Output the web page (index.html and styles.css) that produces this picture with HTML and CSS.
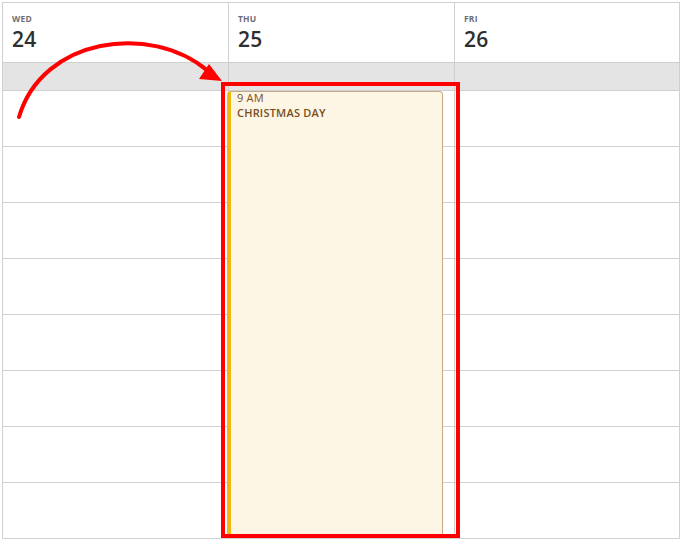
FILE: index.html
```html
<!DOCTYPE html>
<html lang="en">
<head>
  <meta charset="UTF-8">
  <meta name="viewport" content="width=device-width, initial-scale=1.0">
  <title>Week View</title>
  <link rel="stylesheet" href="styles.css">
</head>
<body>
  <div class="calendar">
    <!-- Day headers -->
    <div class="day-head">
      <span class="day-name">WED</span>
      <span class="day-num">24</span>
    </div>
    <div class="day-head">
      <span class="day-name">THU</span>
      <span class="day-num">25</span>
    </div>
    <div class="day-head">
      <span class="day-name">FRI</span>
      <span class="day-num">26</span>
    </div>

    <!-- All-day row -->
    <div class="all-day"></div>
    <div class="all-day"></div>
    <div class="all-day"></div>

    <!-- Hour columns -->
    <div class="day-col">
      <div class="hour"></div><div class="hour"></div><div class="hour"></div><div class="hour"></div>
      <div class="hour"></div><div class="hour"></div><div class="hour"></div><div class="hour"></div>
    </div>
    <div class="day-col">
      <div class="hour"></div><div class="hour"></div><div class="hour"></div><div class="hour"></div>
      <div class="hour"></div><div class="hour"></div><div class="hour"></div><div class="hour"></div>
      <div class="event">
        <span class="event-time">9 AM</span>
        <span class="event-title">CHRISTMAS DAY</span>
      </div>
    </div>
    <div class="day-col">
      <div class="hour"></div><div class="hour"></div><div class="hour"></div><div class="hour"></div>
      <div class="hour"></div><div class="hour"></div><div class="hour"></div><div class="hour"></div>
    </div>

    <!-- Annotation: arrow and highlight box -->
    <svg class="annotation" width="683" height="540" viewBox="0 0 683 540">
      <path d="M19 117 C42 38 150 22 208 71" fill="none" stroke="#ff0000" stroke-width="4" stroke-linecap="round"/>
      <polygon points="222,81 199,79 209,64" fill="#ff0000"/>
      <rect x="223" y="84" width="235" height="452" fill="none" stroke="#ff0000" stroke-width="4"/>
    </svg>
  </div>
</body>
</html>
```

FILE: styles.css
```css
* {
  box-sizing: border-box;
}

body {
  margin: 0;
  font-family: "Open Sans", Arial, sans-serif;
  background-color: #ffffff;
}

.calendar {
  position: relative;
  width: 683px;
  height: 540px;
  padding: 2px 0 0 2px;
  display: grid;
  grid-template-columns: 226px 226px 226px;
  grid-template-rows: 60px 29px 448px;
  overflow: hidden;
}

.day-head {
  border-top: 1px solid #d0d0d0;
  border-left: 1px solid #d0d0d0;
  padding: 10px 0 0 9px;
  display: flex;
  flex-direction: column;
}

.day-head:nth-child(3) {
  border-right: 1px solid #d0d0d0;
}

.day-name {
  font-size: 8.5px;
  font-weight: 700;
  color: #6e6e78;
  letter-spacing: 0.2px;
  line-height: 12px;
}

.day-num {
  font-size: 21px;
  font-weight: 600;
  color: #2e2e2e;
  line-height: 28px;
  letter-spacing: 0.3px;
}

.all-day {
  background-color: #e4e4e4;
  border-top: 1px solid #cfcfcf;
  border-left: 1px solid #cfcfcf;
  border-bottom: 1px solid #cfcfcf;
}

.all-day:nth-child(6) {
  border-right: 1px solid #cfcfcf;
}

.day-col {
  position: relative;
  border-left: 1px solid #d0d0d0;
}

.day-col:nth-child(9) {
  border-right: 1px solid #d0d0d0;
}

.hour {
  height: 56px;
  border-bottom: 1px solid #d0d0d0;
}

.event {
  position: absolute;
  top: 0;
  left: -2px;
  width: 216px;
  height: 446px;
  background-color: #fdf6e4;
  border: 1px solid #c6a982;
  border-left: 4px solid #f0b90f;
  border-radius: 4px;
  padding: 0 0 0 6px;
  display: flex;
  flex-direction: column;
}

.event-time {
  display: block;
  margin-top: -2px;
  font-size: 11px;
  color: #7a4d1f;
  line-height: 15px;
  letter-spacing: 0.2px;
}

.event-title {
  display: block;
  font-size: 11px;
  font-weight: 600;
  color: #7a4d1f;
  line-height: 15px;
  letter-spacing: 0.2px;
}

.annotation {
  position: absolute;
  top: 0;
  left: 0;
  pointer-events: none;
}
```
